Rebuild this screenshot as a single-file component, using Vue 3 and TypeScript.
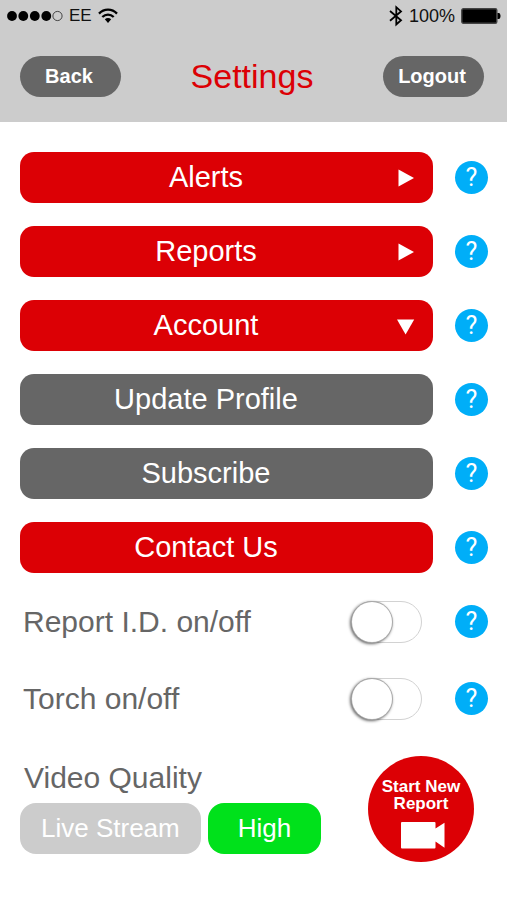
<script setup lang="ts">
import { reactive, ref } from 'vue'

interface MenuItem {
  label: string
  tone: 'red' | 'grey'
  arrow?: 'right' | 'down'
}

interface ToggleItem {
  id: string
  label: string
  on: boolean
}

const menu: MenuItem[] = [
  { label: 'Alerts', tone: 'red', arrow: 'right' },
  { label: 'Reports', tone: 'red', arrow: 'right' },
  { label: 'Account', tone: 'red', arrow: 'down' },
  { label: 'Update Profile', tone: 'grey' },
  { label: 'Subscribe', tone: 'grey' },
  { label: 'Contact Us', tone: 'red' },
]

const toggles = reactive<ToggleItem[]>([
  { id: 'report-id', label: 'Report I.D. on/off', on: false },
  { id: 'torch', label: 'Torch on/off', on: false },
])

const qualities = ['Live Stream', 'High'] as const
const quality = ref<(typeof qualities)[number]>('High')
</script>

<template>
  <div class="page">
    <header class="top">
      <div class="status">
        <div class="status-side">
          <svg width="56" height="12" viewBox="0 0 56 12" aria-hidden="true">
            <circle cx="5" cy="6" r="4.9" />
            <circle cx="16.3" cy="6" r="4.9" />
            <circle cx="27.8" cy="6" r="4.9" />
            <circle cx="39.3" cy="6" r="4.9" />
            <circle cx="50.5" cy="6" r="4.6" fill="none" stroke="#222" stroke-width="0.8" />
          </svg>
          <span class="carrier">EE</span>
          <svg width="20" height="16" viewBox="0 0 20 16" aria-hidden="true">
            <g fill="none" stroke="#000" stroke-width="2.3">
              <path d="M1 5.6C6 .3 14 .3 19 5.6" />
              <path d="M4.3 9C7.6 5.7 12.4 5.7 15.7 9" />
            </g>
            <path d="M6.8 11.3c1.9-1.6 4.5-1.6 6.4 0L10 14.9z" />
          </svg>
        </div>
        <div class="status-side">
          <svg width="14" height="22" viewBox="0 0 14 22" aria-hidden="true">
            <path d="M1 6 12 15.2 7.3 19.4V2.2L12 6.4 1 15.8" fill="none" stroke="#000" stroke-width="1.8" />
          </svg>
          <span class="charge">100%</span>
          <svg width="40" height="16" viewBox="0 0 40 16" aria-hidden="true">
            <rect x="0.8" y="0.8" width="35" height="14.4" rx="1.5" stroke="#444" stroke-width="1.4" />
            <path d="M36.5 5h1.3c2.3 0 2.3 6 0 6h-1.3z" />
          </svg>
        </div>
      </div>
      <div class="title-bar">
        <button type="button" class="pill">Back</button>
        <h1>Settings</h1>
        <button type="button" class="pill">Logout</button>
      </div>
    </header>

    <main>
      <div class="menu">
        <div v-for="item in menu" :key="item.label" class="row">
          <button type="button" class="bar" :class="item.tone">
            <span class="bar-label">{{ item.label }}</span>
            <span class="arrow">
              <svg v-if="item.arrow" width="18" height="18" viewBox="0 0 18 18" aria-hidden="true">
                <path v-if="item.arrow === 'right'" d="M1.5 .5 17 9 1.5 17.5z" fill="#fff" />
                <path v-else d="M0 2.5H17.2L8.6 17.5z" fill="#fff" />
              </svg>
            </span>
          </button>
          <button type="button" class="help">?</button>
        </div>
      </div>

      <div class="toggles">
        <div v-for="item in toggles" :key="item.id" class="row">
          <div class="setting">
            <label :for="item.id">{{ item.label }}</label>
            <input :id="item.id" v-model="item.on" type="checkbox" class="switch" />
          </div>
          <button type="button" class="help">?</button>
        </div>
      </div>

      <div class="bottom">
        <section>
          <h2>Video Quality</h2>
          <div class="options">
            <button
              v-for="name in qualities"
              :key="name"
              type="button"
              class="option"
              :class="{ active: quality === name }"
              @click="quality = name"
            >
              {{ name }}
            </button>
          </div>
        </section>
        <button type="button" class="record">
          <span>Start New</span>
          <span>Report</span>
          <svg width="44" height="27" viewBox="0 0 44 27" aria-hidden="true">
            <path
              d="M1 0H33.500a1 1 0 0 1 1 1V6.500L43.500 .8V25.800L34.500 19.500V25.500A1 1 0 0 1 33.500 26.500H1A1 1 0 0 1 0 25.500V1A1 1 0 0 1 1 0z"
              fill="#fff"
            />
          </svg>
        </button>
      </div>
    </main>
  </div>
</template>

<style>
body {
  background: #fff;
}
</style>

<style scoped>
.page {
  font-family: 'Liberation Sans', Arial, sans-serif;
  color: #666;
}

button {
  border: 0;
  padding: 0;
  font-family: inherit;
  color: #fff;
  cursor: pointer;
}

svg {
  display: block;
  flex: none;
}

.top {
  background: #ccc;
  padding-bottom: 25px;
}

.status {
  display: flex;
  justify-content: space-between;
  align-items: center;
  height: 32px;
  padding: 0 6px 0 7px;
  color: #111;
}

.status-side {
  display: flex;
  align-items: center;
  gap: 6px;
}

.carrier {
  font-size: 17px;
}

.charge {
  font-size: 18px;
}

.title-bar {
  display: grid;
  grid-template-columns: 1fr auto 1fr;
  align-items: center;
  padding: 24px 23px 0 20px;
}

.pill {
  width: 101px;
  height: 41px;
  padding-right: 3px;
  border-radius: 21px;
  background: #666;
  font-size: 20px;
  font-weight: 700;
}

.pill:last-child {
  justify-self: end;
}

h1 {
  margin: 0;
  font-size: 34px;
  line-height: 41px;
  font-weight: 400;
  color: #dc0005;
}

main {
  padding: 30px 19px 38px 20px;
}

.menu,
.toggles {
  display: grid;
  gap: 23px;
}

.toggles {
  gap: 26px;
  padding-top: 23px;
}

.row {
  display: grid;
  grid-template-columns: 1fr 33px;
  gap: 22px;
  align-items: center;
}

.bar {
  display: flex;
  align-items: center;
  gap: 5px;
  height: 51px;
  padding: 0 18px 0 0;
  border-radius: 14px;
  font-size: 29px;
}

.bar-label {
  flex: 1;
}

.arrow {
  width: 18px;
}

.red {
  background: #dc0005;
}

.grey {
  background: #666;
}

.help {
  width: 33px;
  height: 33px;
  border-radius: 50%;
  background: #00aef8;
  font-family: Roboto, 'Liberation Sans', sans-serif;
  font-size: 25px;
  line-height: 33px;
}

.setting {
  display: flex;
  justify-content: space-between;
  align-items: center;
  height: 51px;
  padding: 0 11px 0 3px;
  font-size: 30px;
}

.switch {
  appearance: none;
  display: flex;
  width: 71px;
  height: 42px;
  margin: 0;
  border: 1px solid #d2d2d2;
  border-radius: 21px;
  background: #fff;
  cursor: pointer;
}

.switch::before {
  content: '';
  width: 40px;
  height: 40px;
  border-radius: 50%;
  background: #fff;
  box-shadow: 0 0 0 1px #aaa, -1px 1px 3px 1px rgba(0, 0, 0, 0.6);
}

.switch:checked {
  justify-content: flex-end;
  background: #00e11b;
}

.bottom {
  display: flex;
  justify-content: space-between;
  align-items: center;
  padding: 32px 14px 0 0;
}

h2 {
  margin: 0 0 11px;
  padding-left: 4px;
  font-size: 30px;
  line-height: 28px;
  font-weight: 400;
}

.options {
  display: flex;
  gap: 7px;
}

.option {
  height: 51px;
  padding: 0 30px;
  border-radius: 16px;
  background: #ccc;
  font-size: 26px;
}

.option:first-child {
  padding: 0 21px;
}

.option.active {
  background: #00e11b;
}

.record {
  display: flex;
  flex-direction: column;
  align-items: center;
  width: 106px;
  height: 106px;
  padding-top: 22px;
  border-radius: 50%;
  background: #dc0005;
  font-size: 17px;
  line-height: 17px;
  font-weight: 700;
}

.record svg {
  margin: 10px 0 0 4px;
}
</style>
